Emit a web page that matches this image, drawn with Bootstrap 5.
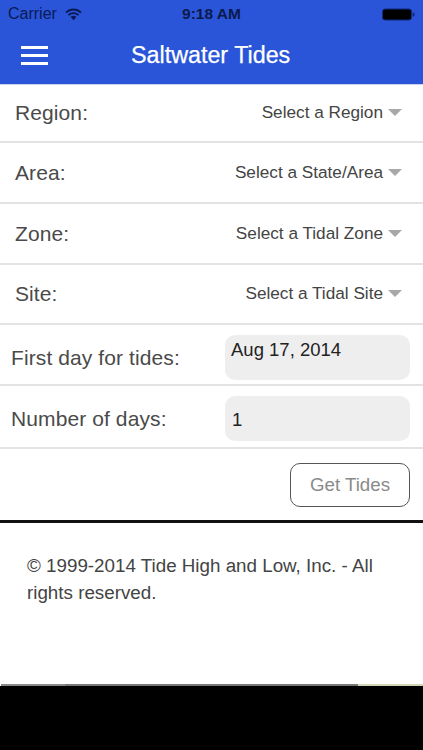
<!DOCTYPE html>
<html lang="en">
<head>
<meta charset="utf-8">
<title>Saltwater Tides</title>
<link href="https://cdn.jsdelivr.net/npm/bootstrap@5.3.0/dist/css/bootstrap.min.css" rel="stylesheet">
<style>
html,body{height:750px;overflow:hidden;background:#fff}
body{font-family:"Liberation Sans",Arial,sans-serif;width:423px;color:#444}
.shell{height:750px}
.topbar{height:85px;background:#2a55d9;border-bottom:1px solid #c9d3f0}
.statusline{height:28px;padding:0 8px 0 8px;color:#0a1a55;font-size:16px;position:relative}
.statusclock{position:absolute;left:0;right:0;text-align:center;font-weight:700;font-size:15.5px;color:#0a1a4d}
.titleline{height:55px;padding-left:21px}
.burger{width:27px;height:19px;flex:none}
.apptitle{color:#fff;font-size:23.3px;font-weight:400;margin:0 0 0 83px;-webkit-text-stroke:.25px #fff}
.selrow{height:61px;border-bottom:2px solid #e3e3e3;padding:0 21px 0 15px}
.selrow:first-of-type{height:58px}
.selrow:nth-of-type(4){height:60px}
.rowlabel{font-size:21px;letter-spacing:.1px;color:#4a4a4a}
.selval{font-size:17.2px;color:#444}
.caret-down{width:0;height:0;border-left:7px solid transparent;border-right:7px solid transparent;border-top:7px solid #a8a8a8;margin-left:5px}
.inrow{height:61px;border-bottom:2px solid #e3e3e3;padding:6px 13px 0 11px}
.inrow.lastin{height:63px;padding-top:4px}
.fieldbox{width:185px;height:45px;background:#eee;border-radius:10px;color:#222;font-size:18.5px;padding:0 6px}
.fieldbox.topalign{padding-top:1px}
.fieldbox.mid{display:flex;align-items:center;padding:2px 7px 0}
.btnrow{height:74px;padding:14px 13px 0 0;border-bottom:3px solid #111}
.tidesbtn{width:120px;height:44px;border:1px solid #555;border-radius:10px;background:#fff;color:#8a8a8a;font-size:18.7px;padding:0}
.foottext{padding:29px 30px 0 27px;font-size:18.8px;line-height:27px;color:#444;height:161px;margin:0}
.blackfoot{flex:1;background:#000;border-top:2px solid #777;border-image:linear-gradient(to right,#fff 0 2px,#8a8a8a 2px 66px,#777 66px 357px,#d4d4b8 357px) 1}
</style>
</head>
<body>
<div class="shell d-flex flex-column">
  <header class="topbar">
    <div class="statusline d-flex align-items-center">
      <span>Carrier</span>
      <svg class="ms-2" width="17" height="13" viewBox="0 0 17 13" aria-hidden="true"><g fill="none" stroke="#0a1a55" stroke-width="1.9"><path d="M1 4.6a10.6 10.6 0 0 1 15 0"/><path d="M3.5 7.2a7 7 0 0 1 10 0"/></g><path d="M5.6 9.1a4 4 0 0 1 5.8 0L8.5 12.3z" fill="#0a1a55"/></svg>
      <span class="statusclock">9:18 AM</span>
      <svg class="ms-auto" width="33" height="13" viewBox="0 0 33 13" aria-hidden="true"><rect x=".5" y="1" width="29" height="11" rx="2.5" fill="#000" stroke="#0f2a80"/><rect x="30.5" y="4.5" width="2" height="4" rx="1" fill="#0f2a80"/></svg>
    </div>
    <div class="titleline d-flex align-items-center">
      <svg class="burger" viewBox="0 0 27 19" aria-hidden="true"><g fill="#fff"><rect y="0" width="27" height="3"/><rect y="8" width="27" height="3"/><rect y="16" width="27" height="3"/></g></svg>
      <h1 class="apptitle">Saltwater Tides</h1>
    </div>
  </header>
  <main>
    <div class="selrow d-flex align-items-center justify-content-between"><span class="rowlabel">Region:</span><span class="d-flex align-items-center"><span class="selval">Select a Region</span><span class="caret-down"></span></span></div>
    <div class="selrow d-flex align-items-center justify-content-between"><span class="rowlabel">Area:</span><span class="d-flex align-items-center"><span class="selval">Select a State/Area</span><span class="caret-down"></span></span></div>
    <div class="selrow d-flex align-items-center justify-content-between"><span class="rowlabel">Zone:</span><span class="d-flex align-items-center"><span class="selval">Select a Tidal Zone</span><span class="caret-down"></span></span></div>
    <div class="selrow d-flex align-items-center justify-content-between"><span class="rowlabel">Site:</span><span class="d-flex align-items-center"><span class="selval">Select a Tidal Site</span><span class="caret-down"></span></span></div>
    <div class="inrow d-flex align-items-center justify-content-between"><span class="rowlabel">First day for tides:</span><div class="fieldbox topalign">Aug 17, 2014</div></div>
    <div class="inrow lastin d-flex align-items-center justify-content-between"><span class="rowlabel">Number of days:</span><div class="fieldbox mid">1</div></div>
    <div class="btnrow d-flex justify-content-end align-items-start"><button type="button" class="btn tidesbtn">Get Tides</button></div>
    <p class="foottext">© 1999-2014 Tide High and Low, Inc. - All rights reserved.</p>
  </main>
  <div class="blackfoot"></div>
</div>
<script src="https://cdn.jsdelivr.net/npm/bootstrap@5.3.0/dist/js/bootstrap.bundle.min.js"></script>
</body>
</html>
